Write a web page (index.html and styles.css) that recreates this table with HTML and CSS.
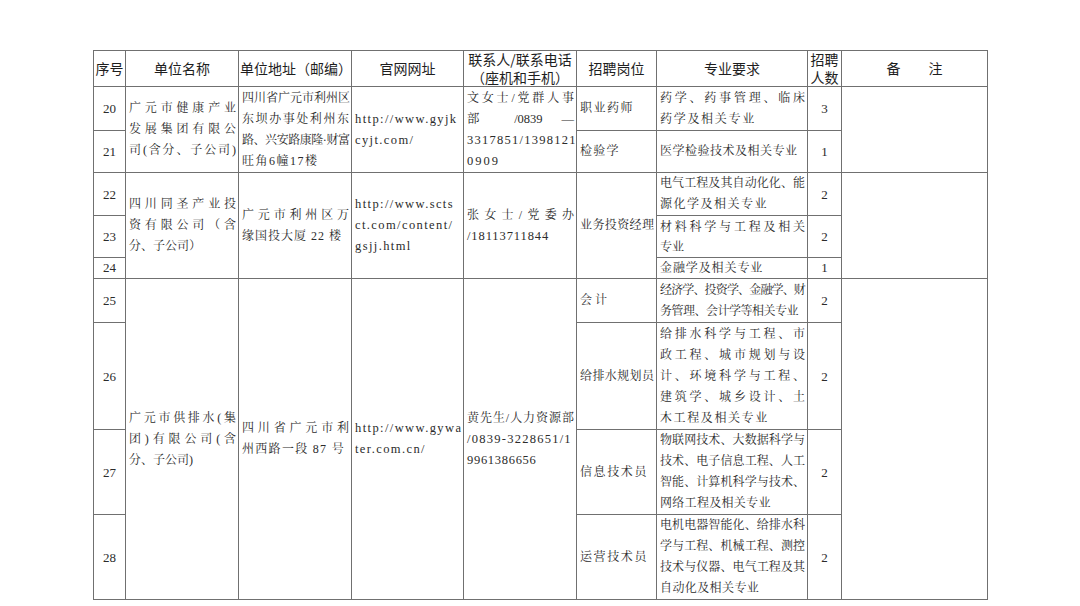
FILE: index.html
```html
<!DOCTYPE html>
<html lang="zh-CN">
<head>
<meta charset="utf-8">
<title>招聘岗位表</title>
<link rel="stylesheet" href="styles.css">
</head>
<body>
<div class="page">
<table class="grid">
  <colgroup>
    <col class="c-no"><col class="c-name"><col class="c-addr"><col class="c-url"><col class="c-contact"><col class="c-post"><col class="c-major"><col class="c-num"><col class="c-note">
  </colgroup>
  <thead>
    <tr class="hd">
      <th>序号</th>
      <th>单位名称</th>
      <th>单位地址（邮编）</th>
      <th>官网网址</th>
      <th><span class="l">联系人/联系电话</span><span class="l">（座机和手机）</span></th>
      <th>招聘岗位</th>
      <th>专业要求</th>
      <th><span class="l">招聘</span><span class="l">人数</span></th>
      <th>备　　注</th>
    </tr>
  </thead>
  <tbody>
    <tr class="r20">
      <td class="no">20</td>
      <td rowspan="2"><span class="l j">广元市健康产业</span><span class="l j">发展集团有限公</span><span class="l j">司(含分、子公司)</span></td>
      <td rowspan="2"><span class="l j">四川省广元市利州区</span><span class="l j">东坝办事处利州东</span><span class="l j lsn4">路、兴安路康隆·财富</span><span class="l ls15">旺角6幢17楼</span></td>
      <td rowspan="2" class="url"><span class="l">http://www.gyjk</span><span class="l">cyjt.com/</span></td>
      <td rowspan="2"><span class="l j">文女士/党群人事</span><span class="l j lat">部 /0839 —</span><span class="l lat wide">3317851/1398121</span><span class="l lat ls2">0909</span></td>
      <td class="ls15">职业药师</td>
      <td><span class="l j">药学、药事管理、临床</span><span class="l ls17">药学及相关专业</span></td>
      <td class="no">3</td>
      <td rowspan="2"></td>
    </tr>
    <tr class="r21">
      <td class="no">21</td>
      <td class="ls13">检验学</td>
      <td><span class="l ls05">医学检验技术及相关专业</span></td>
      <td class="no">1</td>
    </tr>
    <tr class="r22">
      <td class="no">22</td>
      <td rowspan="3"><span class="l j">四川同圣产业投</span><span class="l j">资有限公司（含</span><span class="l">分、子公司）</span></td>
      <td rowspan="3"><span class="l j">广元市利州区万</span><span class="l ls1">缘国投大厦 22 楼</span></td>
      <td rowspan="3" class="url"><span class="l">http://www.scts</span><span class="l">ct.com/content/</span><span class="l">gsjj.html</span></td>
      <td rowspan="3"><span class="l j">张女士/党委办</span><span class="l lat ls09">/18113711844</span></td>
      <td rowspan="3"><span class="l j">业务投资经理</span></td>
      <td><span class="l j">电气工程及其自动化化、能</span><span class="l ls15">源化学及相关专业</span></td>
      <td class="no">2</td>
      <td rowspan="3"></td>
    </tr>
    <tr class="r23">
      <td class="no">23</td>
      <td><span class="l j">材料科学与工程及相关</span><span class="l">专业</span></td>
      <td class="no">2</td>
    </tr>
    <tr class="r24">
      <td class="no">24</td>
      <td><span class="l ls09">金融学及相关专业</span></td>
      <td class="no">1</td>
    </tr>
    <tr class="r25">
      <td class="no">25</td>
      <td rowspan="4"><span class="l j">广元市供排水(集</span><span class="l j">团)有限公司(含</span><span class="l">分、子公司)</span></td>
      <td rowspan="4"><span class="l j">四川省广元市利</span><span class="l ls13">州西路一段 87 号</span></td>
      <td rowspan="4" class="url"><span class="l">http://www.gywa</span><span class="l">ter.com.cn/</span></td>
      <td rowspan="4"><span class="l j">黄先生/人力资源部</span><span class="l lat wide">/0839-3228651/1</span><span class="l lat ls07">9961386656</span></td>
      <td class="ls3">会计</td>
      <td><span class="l j tight">经济学、投资学、金融学、财</span><span class="l lsn5">务管理、会计学等相关专业</span></td>
      <td class="no">2</td>
      <td rowspan="4"></td>
    </tr>
    <tr class="r26">
      <td class="no">26</td>
      <td><span class="l j">给排水规划员</span></td>
      <td><span class="l j">给排水科学与工程、市</span><span class="l j">政工程、城市规划与设</span><span class="l j">计、环境科学与工程、</span><span class="l j">建筑学、城乡设计、土</span><span class="l ls16">木工程及相关专业</span></td>
      <td class="no">2</td>
    </tr>
    <tr class="r27">
      <td class="no">27</td>
      <td class="ls16">信息技术员</td>
      <td><span class="l j">物联网技术、大数据科学与</span><span class="l j">技术、电子信息工程、人工</span><span class="l j">智能、计算机科学与技术、</span><span class="l ls03">网络工程及相关专业</span></td>
      <td class="no">2</td>
    </tr>
    <tr class="r28">
      <td class="no">28</td>
      <td class="ls16">运营技术员</td>
      <td><span class="l j">电机电器智能化、给排水科</span><span class="l j">学与工程、机械工程、测控</span><span class="l j">技术与仪器、电气工程及其</span><span class="l ls04">自动化及相关专业</span></td>
      <td class="no">2</td>
    </tr>
  </tbody>
</table>
</div>
</body>
</html>
```
FILE: styles.css
```css
html, body {
  margin: 0;
  padding: 0;
  background: #ffffff;
}

.page {
  padding: 50px 0 0 93px;
}

.grid {
  border-collapse: collapse;
  table-layout: fixed;
  width: 894px;
  color: #2b2b2b;
  font-family: "Liberation Serif", "Noto Serif CJK SC", "Noto Sans CJK SC", serif;
  font-size: 12px;
  line-height: 21px;
}

.c-no { width: 32px; }
.c-name { width: 113px; }
.c-addr { width: 113px; }
.c-url { width: 112px; }
.c-contact { width: 113px; }
.c-post { width: 80px; }
.c-major { width: 151px; }
.c-num { width: 34px; }
.c-note { width: 146px; }

.grid th,
.grid td {
  border: 1px solid #707070;
  padding: 0 2px 0 3px;
  vertical-align: middle;
  text-align: left;
  white-space: nowrap;
  overflow: hidden;
}

.grid th {
  font-family: "Noto Sans CJK SC", sans-serif;
  font-weight: normal;
  font-size: 14px;
  line-height: 17.5px;
  text-align: center;
  color: #1e1e1e;
  padding: 0 1px;
}

.hd { height: 36px; }
.r20 { height: 44px; }
.r21 { height: 42px; }
.r22 { height: 43px; }
.r23 { height: 42px; }
.r23 td { line-height: 20px; }
.r24 { height: 21px; }
.r24 td { line-height: 18px; }
.r25 { height: 44px; }
.r26 { height: 107px; }
.r27 { height: 85px; }
.r28 { height: 85px; }

.l {
  display: block;
}

.j {
  text-align: justify;
  text-align-last: justify;
}

.grid td.no {
  text-align: center;
  font-size: 13px;
  padding: 0;
}

.url {
  font-size: 12.5px;
  letter-spacing: 1.4px;
}

.lat { font-size: 12.5px; }
.wide { letter-spacing: 1.25px; }

.tight { letter-spacing: -0.85px; }
.lsn5 { letter-spacing: -0.5px; }
.lsn4 { letter-spacing: -0.45px; }
.ls03 { letter-spacing: 0.3px; }
.ls04 { letter-spacing: 0.4px; }
.ls05 { letter-spacing: 0.5px; }
.ls07 { letter-spacing: 0.7px; }
.ls09 { letter-spacing: 0.9px; }
.ls1 { letter-spacing: 1px; }
.ls13 { letter-spacing: 1.3px; }
.ls15 { letter-spacing: 1.5px; }
.ls16 { letter-spacing: 1.6px; }
.ls17 { letter-spacing: 1.7px; }
.ls2 { letter-spacing: 2px; }
.ls3 { letter-spacing: 3px; }
```
